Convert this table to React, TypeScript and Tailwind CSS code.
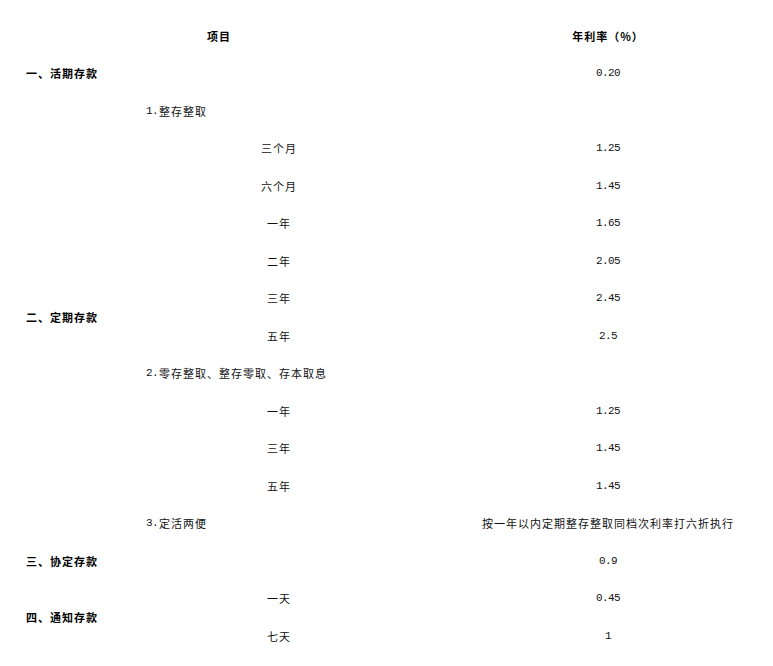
import React from "react";

const cjk = "font-['Noto_Sans_CJK_SC','Noto_Sans',sans-serif]";
const mono = "font-['Liberation_Mono','Noto_Sans_CJK_SC',monospace]";

function Cn({ children, bold = false }: { children: React.ReactNode; bold?: boolean }) {
  return (
    <span className={`${cjk} text-[11px] tracking-[1px] ${bold ? "font-bold text-black" : "text-[#111]"}`}>
      {children}
    </span>
  );
}

function Num({ children }: { children: React.ReactNode }) {
  return <span className={`${mono} text-[11px] tracking-[-0.6px] text-[#111]`}>{children}</span>;
}

function Sub({ n, text }: { n: string; text: string }) {
  return (
    <div className="col-start-2 flex items-center pl-[26px]">
      <Num>{n}</Num>
      <span className="w-[1px]" />
      <Cn>{text}</Cn>
    </div>
  );
}

function Term({ text }: { text: string }) {
  return (
    <div className="col-start-2 flex items-center justify-center">
      <Cn>{text}</Cn>
    </div>
  );
}

function Rate({ children }: { children?: React.ReactNode }) {
  return <div className="col-start-3 flex items-center justify-center pl-[5px]">{children}</div>;
}

export default function App() {
  return (
    <div className="w-[773px] h-[666px] bg-white overflow-hidden pt-[17px]">
      <div className="grid grid-cols-[120px_318px_335px] auto-rows-[37.5px]">
        {/* header */}
        <div className="col-span-2 flex items-center justify-center">
          <Cn bold>项目</Cn>
        </div>
        <Rate>
          <Cn bold>年利率（%）</Cn>
        </Rate>

        {/* 活期 */}
        <div className="col-span-2 flex items-center pl-[26px]">
          <Cn bold>一、活期存款</Cn>
        </div>
        <Rate>
          <Num>0.20</Num>
        </Rate>

        {/* 定期 */}
        <div className="col-start-1 row-span-12 flex items-center pl-[26px]">
          <Cn bold>二、定期存款</Cn>
        </div>
        <Sub n="1." text="整存整取" />
        <Rate />
        <Term text="三个月" />
        <Rate><Num>1.25</Num></Rate>
        <Term text="六个月" />
        <Rate><Num>1.45</Num></Rate>
        <Term text="一年" />
        <Rate><Num>1.65</Num></Rate>
        <Term text="二年" />
        <Rate><Num>2.05</Num></Rate>
        <Term text="三年" />
        <Rate><Num>2.45</Num></Rate>
        <Term text="五年" />
        <Rate><Num>2.5</Num></Rate>
        <Sub n="2." text="零存整取、整存零取、存本取息" />
        <Rate />
        <Term text="一年" />
        <Rate><Num>1.25</Num></Rate>
        <Term text="三年" />
        <Rate><Num>1.45</Num></Rate>
        <Term text="五年" />
        <Rate><Num>1.45</Num></Rate>
        <Sub n="3." text="定活两便" />
        <Rate>
          <Cn>按一年以内定期整存整取同档次利率打六折执行</Cn>
        </Rate>

        {/* 协定 */}
        <div className="col-span-2 flex items-center pl-[26px]">
          <Cn bold>三、协定存款</Cn>
        </div>
        <Rate><Num>0.9</Num></Rate>

        {/* 通知 */}
        <div className="col-start-1 row-span-2 flex items-center pl-[26px]">
          <Cn bold>四、通知存款</Cn>
        </div>
        <Term text="一天" />
        <Rate><Num>0.45</Num></Rate>
        <Term text="七天" />
        <Rate><Num>1</Num></Rate>
      </div>
    </div>
  );
}
